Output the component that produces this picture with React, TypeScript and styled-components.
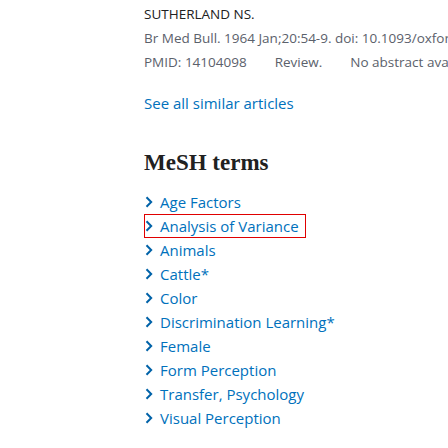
import styled, { createGlobalStyle } from "styled-components";

const GlobalStyle = createGlobalStyle`
  html, body {
    margin: 0;
    padding: 0;
    background: #fff;
    overflow: hidden;
  }
  body {
    font-family: "Open Sans", "Noto Sans", sans-serif;
  }
`

const meshTerms = [
    {label: "Age Factors"},
    {label: "Analysis of Variance", highlighted: true},
    {label: "Animals"},
    {label: "Cattle*"},
    {label: "Color"},
    {label: "Discrimination Learning*"},
    {label: "Female"},
    {label: "Form Perception"},
    {label: "Transfer, Psychology"},
    {label: "Visual Perception"},
]

const Chevron = () => (
    <ChevronSvg width="8" height="12" viewBox="0 0 8 12">
        <path d="M1.5 1.2 L6.2 6 L1.5 10.8" fill="none" stroke="#0062a8" strokeWidth="2"/>
    </ChevronSvg>
)

export default function App() {
    return (
        <>
            <GlobalStyle/>
            <Page>
                <Citation>
                    <Authors>SUTHERLAND NS.</Authors>
                    <Journal>Br Med Bull. 1964 Jan;20:54-9. doi: 10.1093/oxfordjournals.bmb.a070286.</Journal>
                    <Meta>
                        <span>PMID: 14104098</span>
                        <span>Review.</span>
                        <span>No abstract available.</span>
                    </Meta>
                </Citation>
                <SeeAll href="#">See all similar articles</SeeAll>
                <Heading>MeSH terms</Heading>
                <TermList>
                    {meshTerms.map(term => (
                        <TermItem key={term.label} $highlighted={!!term.highlighted}>
                            <Chevron/>
                            <TermLink href="#">{term.label}</TermLink>
                        </TermItem>
                    ))}
                </TermList>
            </Page>
        </>
    )
}

const Page = styled.div`
  padding: 0 0 0 144px;
  width: 448px;
  box-sizing: border-box;
  white-space: nowrap;
`

const Citation = styled.div`
  font-size: 13.5px;
  line-height: 24px;
  padding-top: 2px;
`

const Authors = styled.div`
  color: #212121;
`

const Journal = styled.div`
  color: #5b616b;
  overflow: hidden;
`

const Meta = styled.div`
  color: #5b616b;
  display: flex;
  gap: 28px;
  overflow: hidden;
`

const SeeAll = styled.a`
  display: block;
  margin-top: 17px;
  font-size: 15px;
  line-height: 24px;
  color: #0071bc;
  text-decoration: none;
`

const Heading = styled.h2`
  margin: 33px 0 0;
  font-family: "Liberation Serif", "DejaVu Serif", serif;
  font-weight: 700;
  font-size: 23px;
  line-height: 30px;
  color: #212121;
`

const TermList = styled.ul`
  list-style: none;
  margin: 12px 0 0;
  padding: 0;
`

const TermItem = styled.li<{ $highlighted: boolean }>`
  display: flex;
  align-items: center;
  gap: 7px;
  height: 24px;
  width: ${p => p.$highlighted ? "162px" : "auto"};
  box-sizing: border-box;
  outline: ${p => p.$highlighted ? "1px solid #e00000" : "none"};
  outline-offset: -1px;
  padding-left: 1px;
`

const ChevronSvg = styled.svg`
  flex: none;
`

const TermLink = styled.a`
  font-size: 15px;
  color: #0071bc;
  text-decoration: none;
`
